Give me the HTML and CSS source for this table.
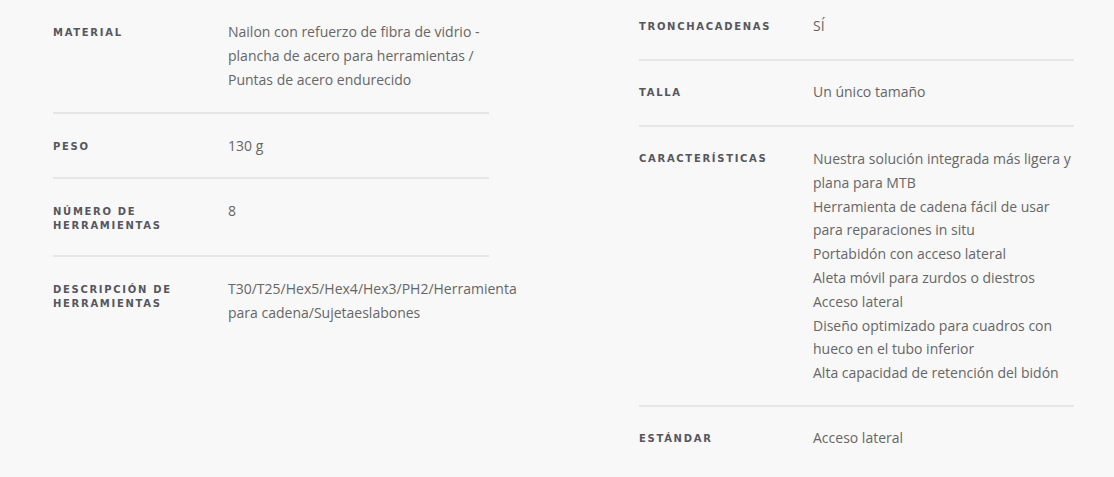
FILE: index.html
```html
<!DOCTYPE html>
<html lang="es">
<head>
    <meta charset="UTF-8">
    <meta name="viewport" content="width=device-width, initial-scale=1.0">
    <title>Especificaciones</title>
    <link rel="stylesheet" href="styles.css">
</head>
<body>
    <main class="specs">
        <div class="spec-col spec-col-left">
            <div class="spec-row">
                <div class="spec-label">Material</div>
                <div class="spec-value">Nailon con refuerzo de fibra de vidrio - plancha de acero para herramientas / Puntas de acero endurecido</div>
            </div>
            <div class="spec-row">
                <div class="spec-label">Peso</div>
                <div class="spec-value">130 g</div>
            </div>
            <div class="spec-row">
                <div class="spec-label">Número de herramientas</div>
                <div class="spec-value">8</div>
            </div>
            <div class="spec-row last">
                <div class="spec-label">Descripción de herramientas</div>
                <div class="spec-value">T30/T25/Hex5/Hex4/Hex3/PH2/Herramienta para cadena/Sujetaeslabones</div>
            </div>
        </div>
        <div class="spec-col spec-col-right">
            <div class="spec-row">
                <div class="spec-label">Tronchacadenas</div>
                <div class="spec-value">SÍ</div>
            </div>
            <div class="spec-row">
                <div class="spec-label">Talla</div>
                <div class="spec-value">Un único tamaño</div>
            </div>
            <div class="spec-row features">
                <div class="spec-label">Características</div>
                <div class="spec-value">
                    <ul class="feature-list">
                        <li>Nuestra solución integrada más ligera y plana para MTB</li>
                        <li>Herramienta de cadena fácil de usar para reparaciones in situ</li>
                        <li>Portabidón con acceso lateral</li>
                        <li>Aleta móvil para zurdos o diestros</li>
                        <li>Acceso lateral</li>
                        <li>Diseño optimizado para cuadros con hueco en el tubo inferior</li>
                        <li>Alta capacidad de retención del bidón</li>
                    </ul>
                </div>
            </div>
            <div class="spec-row last">
                <div class="spec-label">Estándar</div>
                <div class="spec-value">Acceso lateral</div>
            </div>
        </div>
    </main>
</body>
</html>
```

FILE: styles.css
```css
body {
    margin: 0;
    padding: 0;
    background-color: #f8f8f8;
    font-family: "Open Sans", Arial, sans-serif;
}

.specs {
    display: flex;
    align-items: flex-start;
    gap: 150px;
    padding-left: 53px;
}

.spec-col {
    width: 436px;
}

.spec-col-left {
    margin-top: 6px;
}

.spec-col-right {
    width: 435px;
}

.spec-row {
    display: flex;
    padding: 14px 0 20px;
    border-bottom: 2px solid #e6e6e6;
}

.spec-row + .spec-row {
    padding-top: 20px;
    padding-bottom: 19px;
}

.spec-col-right .spec-row {
    padding-bottom: 21px;
}

.spec-col-right .spec-row + .spec-row {
    padding-top: 19px;
}

.spec-col-right .spec-row.features {
    padding-bottom: 20px;
}

.spec-row.last {
    border-bottom: none;
}

.spec-label {
    flex: 0 0 174px;
    padding: 6px 0 3px;
    font-family: "DejaVu Sans", "Open Sans", sans-serif;
    font-size: 10px;
    font-weight: 700;
    line-height: 14px;
    letter-spacing: 1.7px;
    text-transform: uppercase;
    color: #56565e;
}

.spec-col-left .spec-label {
    flex-basis: 175px;
}

.spec-value {
    flex: 1;
    font-size: 14px;
    line-height: 24px;
    color: #666;
}

.feature-list {
    list-style: none;
    margin: 0;
    padding: 1px 0 0;
}

.feature-list li {
    line-height: 23.8px;
}
```
